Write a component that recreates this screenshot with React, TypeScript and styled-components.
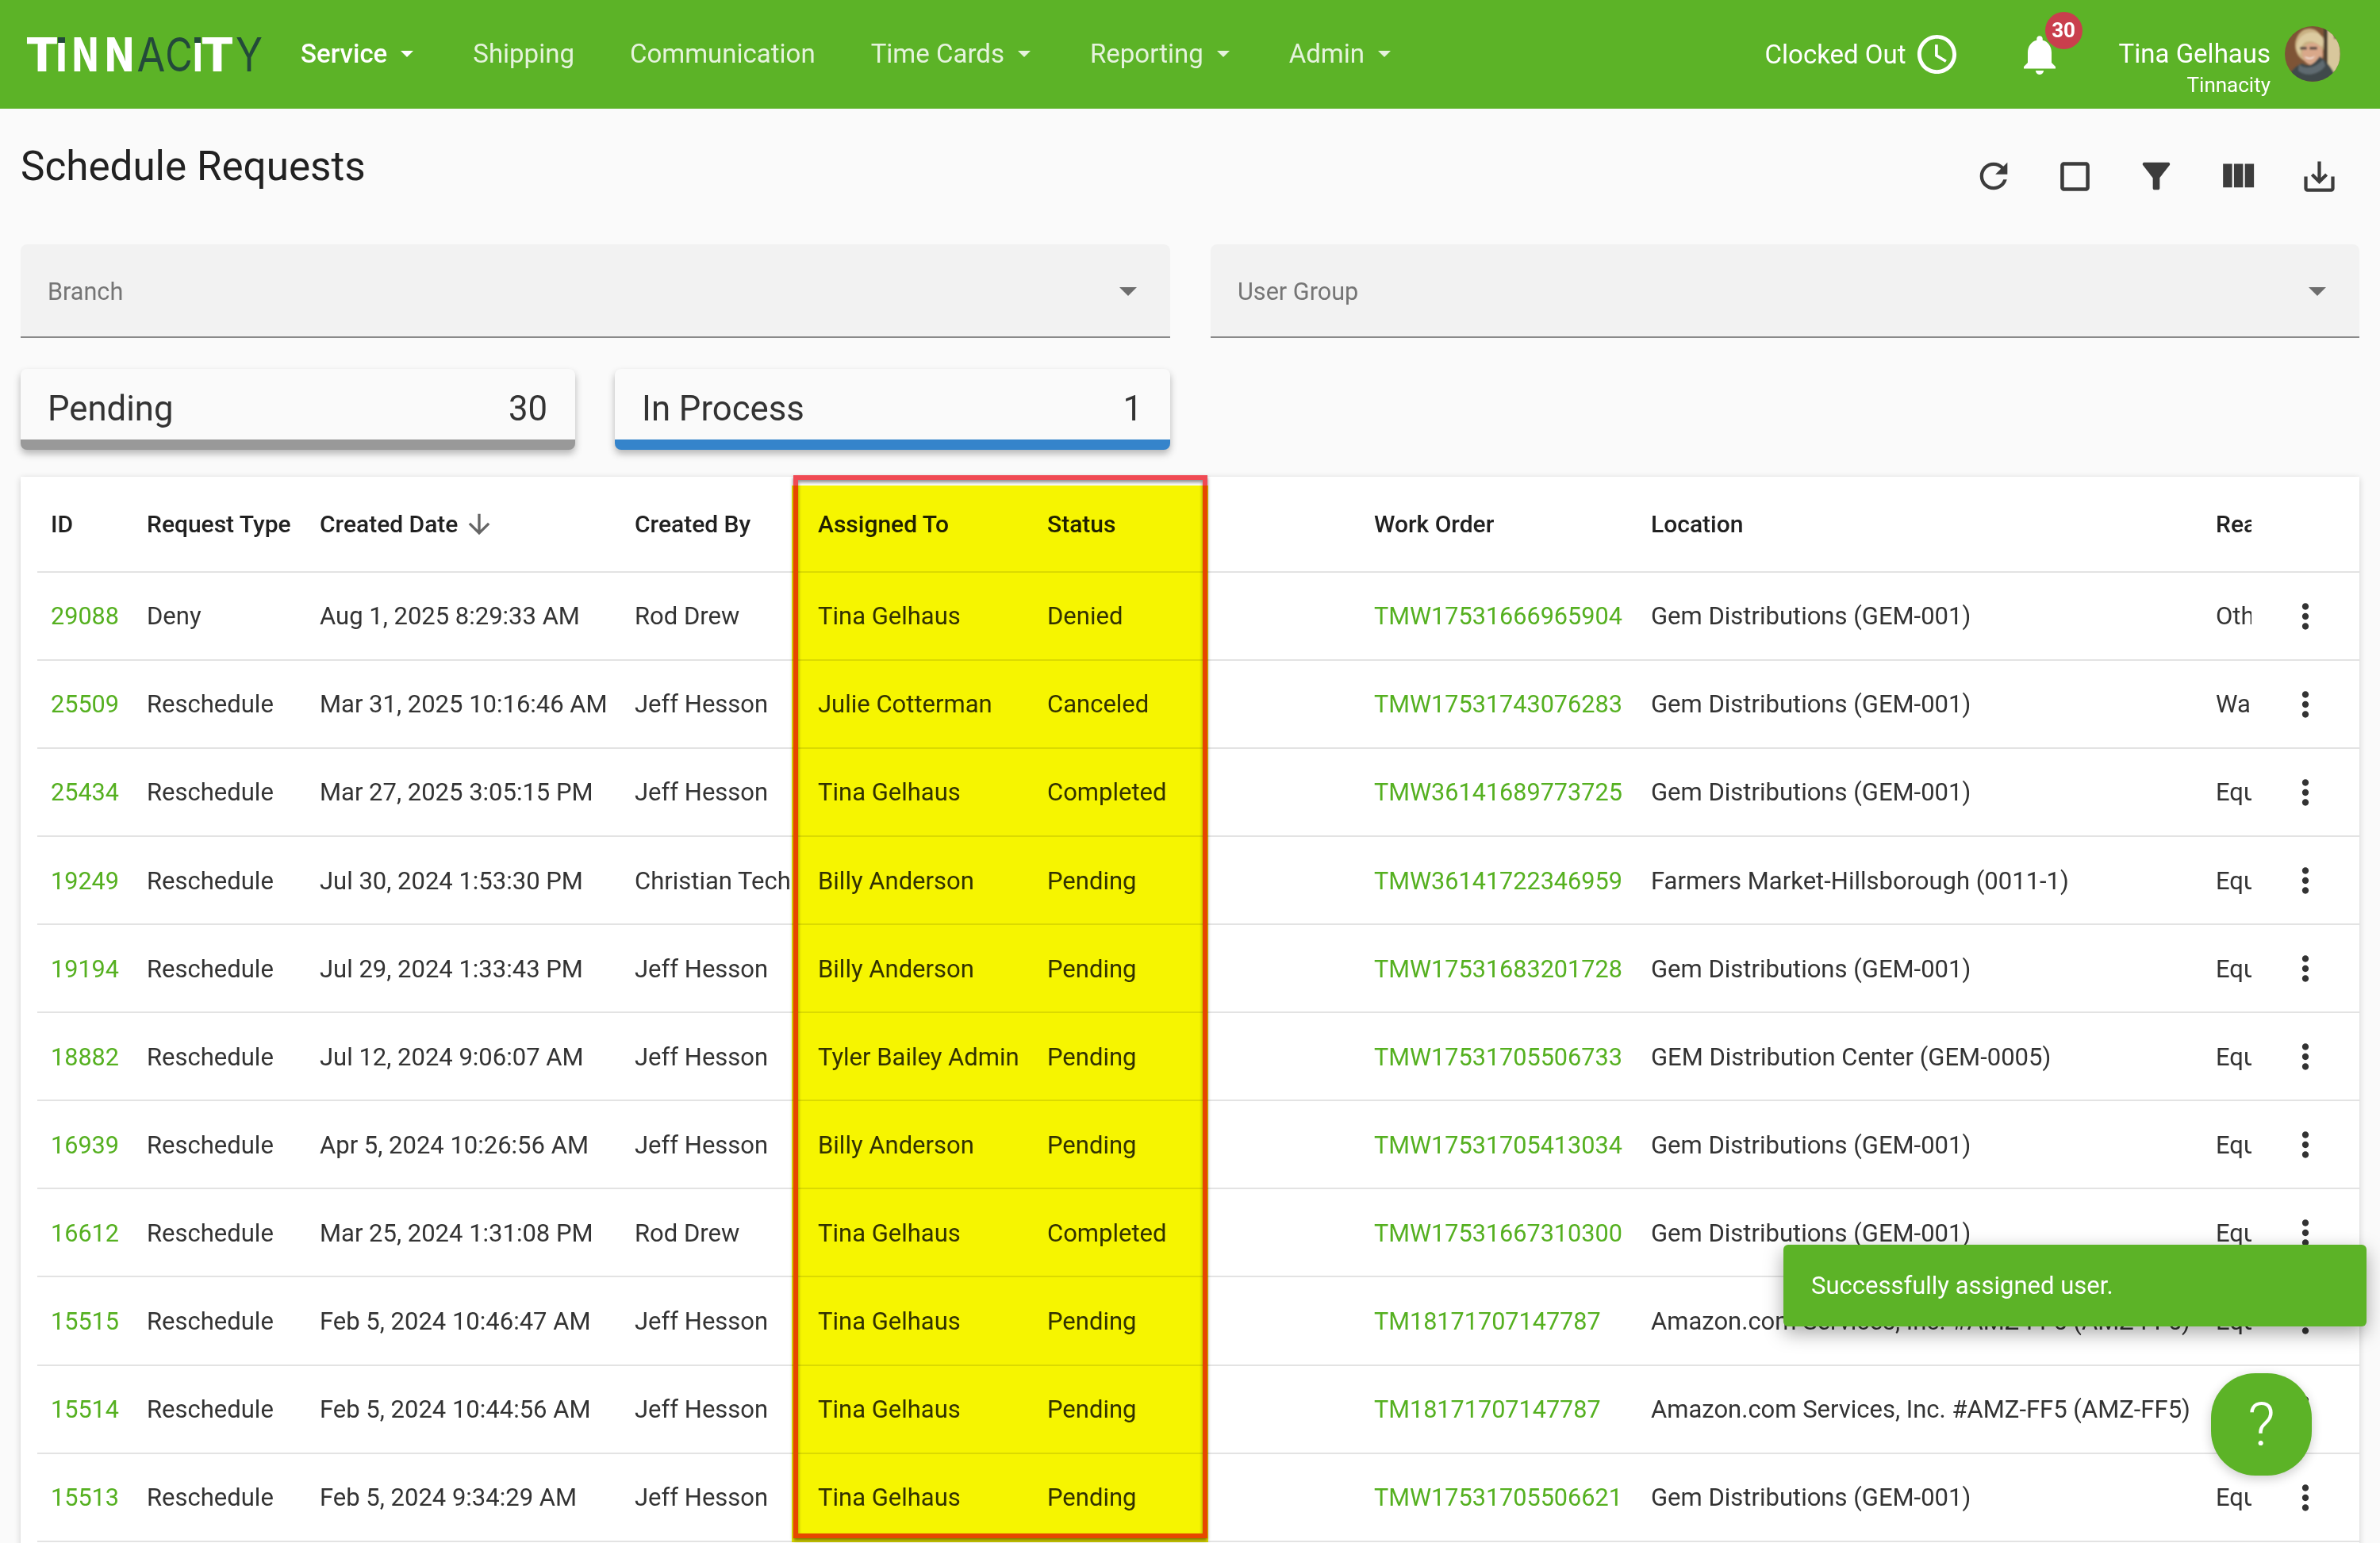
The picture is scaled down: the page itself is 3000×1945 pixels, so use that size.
import styled, { createGlobalStyle } from "styled-components";

const GREEN = "#5cb327";
const COLUMNS = "121px 218px 397px 231px 289px 412px 349px 712px 62px 136px";

const GlobalStyle = createGlobalStyle`
  html, body {
    margin: 0;
    padding: 0;
    background: #fafafa;
    overflow: hidden;
  }
  * {
    box-sizing: border-box;
  }
`;

const Page = styled.div`
  position: relative;
  isolation: isolate;
  width: 3000px;
  height: 1945px;
  overflow: hidden;
  background: #fafafa;
  color: #333;
  font-family: Roboto, "Liberation Sans", sans-serif;
  font-size: 30.6px;
`;

const Header = styled.header`
  display: flex;
  align-items: center;
  height: 137px;
  padding-left: 34px;
  background: ${GREEN};
  color: #fff;
  font-size: 33px;
`;

const Logo = styled.div`
  display: flex;
  align-items: center;
  width: 345px;
  height: 43px;
  flex-shrink: 0;
`;

const LogoLetter = styled.span<{
  $w: number;
  $gap?: number;
  $sx: number;
  $thin?: boolean;
  $dot?: boolean;
}>`
  position: relative;
  display: flex;
  justify-content: center;
  flex-shrink: 0;
  width: ${(p) => p.$w}px;
  height: 43px;
  margin-left: ${(p) => p.$gap ?? 0}px;
  line-height: 43px;
  font-family: Inter, Roboto, sans-serif;
  font-size: 59px;
  font-weight: ${(p) => (p.$thin ? 400 : 800)};
  color: ${(p) => (p.$thin ? "#234a3a" : "#fff")};

  & > span {
    display: block;
    transform: scaleX(${(p) => p.$sx});
  }

  ${(p) =>
    p.$dot &&
    `&::before {
      content: "";
      position: absolute;
      left: 0;
      right: 0;
      top: 0;
      height: 7px;
      background: #234a3a;
      z-index: 1;
    }`}
`;

const Nav = styled.nav`
  display: flex;
  align-items: center;
  gap: 70px;
  margin-bottom: 2px;
`;

const NavItem = styled.a<{ $active?: boolean }>`
  display: flex;
  align-items: center;
  gap: 17px;
  font-weight: ${(p) => (p.$active ? 500 : 400)};
  color: ${(p) => (p.$active ? "#fff" : "rgba(255,255,255,.84)")};
`;

const NavCaret = styled.span`
  width: 0;
  height: 0;
  margin-right: 5px;
  border-left: 8px solid transparent;
  border-right: 8px solid transparent;
  border-top: 8px solid currentColor;
`;

const HeaderRight = styled.div`
  display: flex;
  align-items: center;
  margin-left: auto;
  padding-right: 50px;
`;

const ClockStatus = styled.div`
  display: flex;
  align-items: center;
  gap: 9px;
`;

const BellWrap = styled.div`
  position: relative;
  display: flex;
  width: 60px;
  height: 60px;
  margin: 0 70px;
`;

const Badge = styled.span`
  position: absolute;
  left: 37px;
  top: -24px;
  display: flex;
  align-items: center;
  justify-content: center;
  width: 47px;
  height: 47px;
  border-radius: 50%;
  background: #c93f4d;
  color: #fff;
  font-size: 26px;
  font-weight: 700;
`;

const UserBlock = styled.div`
  display: flex;
  flex-direction: column;
  align-items: flex-end;
  margin-right: 18px;
  padding-top: 41px;
`;

const UserName = styled.div`
  line-height: 36px;
`;

const UserOrg = styled.div`
  font-size: 26px;
  line-height: 42px;
`;

const Avatar = styled.svg`
  display: block;
  width: 70px;
  height: 70px;
  border-radius: 50%;
  margin-top: -2px;
`;

const Content = styled.main`
  padding: 0 26px;
`;

const TitleRow = styled.div`
  display: flex;
  justify-content: space-between;
  height: 171px;
`;

const Title = styled.h1`
  margin: 44px 0 0;
  font-size: 51.2px;
  line-height: 58px;
  font-weight: 400;
  color: #212121;
`;

const Toolbar = styled.div`
  display: flex;
  gap: 47.5px;
  margin: 57.5px 23.5px 0 0;
`;

const ToolSlot = styled.span`
  display: flex;
  align-items: center;
  justify-content: center;
  width: 55px;
  height: 55px;
`;

const ToolIcon = styled.svg<{ $size: number }>`
  display: block;
  width: ${(p) => p.$size}px;
  height: ${(p) => p.$size}px;
  fill: #3c3c3c;
`;

const FilterRow = styled.div`
  display: grid;
  grid-template-columns: 1449px 1448px;
  gap: 51px;
`;

const FilterBox = styled.div`
  display: flex;
  align-items: center;
  justify-content: space-between;
  height: 118px;
  padding: 2px 42px 0 34px;
  border-radius: 8px 8px 0 0;
  border-bottom: 2px solid #8a8a8a;
  background: #f2f2f2;
  color: #757575;
`;

const FilterCaret = styled.span`
  width: 0;
  height: 0;
  border-left: 11px solid transparent;
  border-right: 11px solid transparent;
  border-top: 11px solid #6e6e6e;
`;

const CountRow = styled.div`
  display: grid;
  grid-template-columns: 699px 700px;
  gap: 50px;
  width: 1449px;
  margin-top: 39px;
`;

const CountCard = styled.div<{ $accent: string }>`
  display: flex;
  align-items: center;
  justify-content: space-between;
  height: 102px;
  padding: 11px 35px 0 34px;
  border-radius: 8px;
  border-bottom: 13px solid ${(p) => p.$accent};
  background: #fafafa;
  box-shadow: 0 5px 10px rgba(0, 0, 0, 0.28);
  font-size: 43.7px;
  color: #333;
`;

const TableCard = styled.section`
  height: 1400px;
  margin-top: 34px;
  padding-left: 21px;
  background: #fff;
  box-shadow: 0 2px 8px rgba(0, 0, 0, 0.18);
`;

const Row = styled.div<{ $head?: boolean }>`
  display: grid;
  grid-template-columns: ${COLUMNS};
  align-items: center;
  height: ${(p) => (p.$head ? "120.7px" : "111.1px")};
  padding-top: 1px;
  border-bottom: 2px solid #e3e3e3;
  white-space: nowrap;
  font-size: ${(p) => (p.$head ? "30px" : "31px")};
  font-weight: ${(p) => (p.$head ? 500 : 400)};
  color: ${(p) => (p.$head ? "#212121" : "#333")};
`;

const Cell = styled.div`
  display: flex;
  align-items: center;
  padding-left: 17px;
  min-width: 0;
`;

const ReasonCell = styled(Cell)`
  overflow: hidden;
`;

const LinkCell = styled(Cell)`
  color: #55b020;
  font-size: 30.6px;
`;

const ActionCell = styled(Cell)`
  justify-content: center;
  padding-left: 0;
`;

const SortIcon = styled.svg`
  flex-shrink: 0;
  width: 40px;
  height: 40px;
  margin-left: 7px;
  fill: #666;
`;

const MoreIcon = styled.svg`
  display: block;
  width: 50px;
  height: 50px;
  fill: #333;
`;

const RedBox = styled.div`
  position: absolute;
  left: 1000px;
  top: 599px;
  width: 522px;
  height: 1340px;
  border: 6px solid #f04a54;
  box-shadow: 0 3px 4px rgba(0, 0, 0, 0.5), inset 0 3px 4px rgba(0, 0, 0, 0.45);
`;

const YellowBox = styled.div`
  position: absolute;
  left: 998px;
  top: 612px;
  width: 525px;
  height: 1332px;
  background: #f6f500;
  mix-blend-mode: multiply;
`;

const Toast = styled.div`
  position: absolute;
  left: 2248px;
  top: 1569px;
  display: flex;
  align-items: center;
  width: 735px;
  height: 103px;
  padding-left: 35px;
  border-radius: 6px;
  background: ${GREEN};
  box-shadow: 0 8px 24px rgba(0, 0, 0, 0.35);
  color: #fff;
  font-size: 31px;
`;

const HelpButton = styled.div`
  position: absolute;
  left: 2787px;
  top: 1731px;
  display: flex;
  align-items: center;
  justify-content: center;
  width: 127px;
  height: 129px;
  border-radius: 56px;
  background: ${GREEN};
  box-shadow: 0 4px 14px rgba(0, 0, 0, 0.2);
  color: #fff;
  font-size: 76px;
  font-weight: 300;
`;

type Req = {
  id: string;
  type: string;
  date: string;
  by: string;
  to: string;
  status: string;
  order: string;
  location: string;
  reason: string;
};

const GEM = "Gem Distributions (GEM-001)";
const AMZ = "Amazon.com Services, Inc. #AMZ-FF5 (AMZ-FF5)";

const requests: Req[] = [
  { id: "29088", type: "Deny", date: "Aug 1, 2025 8:29:33 AM", by: "Rod Drew", to: "Tina Gelhaus", status: "Denied", order: "TMW17531666965904", location: GEM, reason: "Other" },
  { id: "25509", type: "Reschedule", date: "Mar 31, 2025 10:16:46 AM", by: "Jeff Hesson", to: "Julie Cotterman", status: "Canceled", order: "TMW17531743076283", location: GEM, reason: "Wait" },
  { id: "25434", type: "Reschedule", date: "Mar 27, 2025 3:05:15 PM", by: "Jeff Hesson", to: "Tina Gelhaus", status: "Completed", order: "TMW36141689773725", location: GEM, reason: "Equipment" },
  { id: "19249", type: "Reschedule", date: "Jul 30, 2024 1:53:30 PM", by: "Christian Tech", to: "Billy Anderson", status: "Pending", order: "TMW36141722346959", location: "Farmers Market-Hillsborough (0011-1)", reason: "Equipment" },
  { id: "19194", type: "Reschedule", date: "Jul 29, 2024 1:33:43 PM", by: "Jeff Hesson", to: "Billy Anderson", status: "Pending", order: "TMW17531683201728", location: GEM, reason: "Equipment" },
  { id: "18882", type: "Reschedule", date: "Jul 12, 2024 9:06:07 AM", by: "Jeff Hesson", to: "Tyler Bailey Admin", status: "Pending", order: "TMW17531705506733", location: "GEM Distribution Center (GEM-0005)", reason: "Equipment" },
  { id: "16939", type: "Reschedule", date: "Apr 5, 2024 10:26:56 AM", by: "Jeff Hesson", to: "Billy Anderson", status: "Pending", order: "TMW17531705413034", location: GEM, reason: "Equipment" },
  { id: "16612", type: "Reschedule", date: "Mar 25, 2024 1:31:08 PM", by: "Rod Drew", to: "Tina Gelhaus", status: "Completed", order: "TMW17531667310300", location: GEM, reason: "Equipment" },
  { id: "15515", type: "Reschedule", date: "Feb 5, 2024 10:46:47 AM", by: "Jeff Hesson", to: "Tina Gelhaus", status: "Pending", order: "TM18171707147787", location: AMZ, reason: "Equipment" },
  { id: "15514", type: "Reschedule", date: "Feb 5, 2024 10:44:56 AM", by: "Jeff Hesson", to: "Tina Gelhaus", status: "Pending", order: "TM18171707147787", location: AMZ, reason: "Equipment" },
  { id: "15513", type: "Reschedule", date: "Feb 5, 2024 9:34:29 AM", by: "Jeff Hesson", to: "Tina Gelhaus", status: "Pending", order: "TMW17531705506621", location: GEM, reason: "Equipment" },
];

const toolIcons = [
  { size: 52, d: "M17.65 6.35C16.2 4.9 14.21 4 12 4c-4.42 0-7.99 3.58-7.99 8s3.57 8 7.99 8c3.73 0 6.84-2.55 7.73-6h-2.08c-.82 2.33-3.04 4-5.65 4-3.31 0-6-2.69-6-6s2.69-6 6-6c1.66 0 3.14.69 4.22 1.78L13 11h7V4l-2.35 2.35z" },
  { size: 57, d: "M18 4H6c-1.1 0-2 .9-2 2v12c0 1.1.9 2 2 2h12c1.1 0 2-.9 2-2V6c0-1.1-.9-2-2-2zm0 14H6V6h12v12z" },
  { size: 52, d: "M4.25 5.61C6.27 8.2 10 13 10 13v6c0 .55.45 1 1 1h2c.55 0 1-.45 1-1v-6s3.72-4.8 5.74-7.39c.51-.66.04-1.61-.79-1.61H5.04c-.83 0-1.3.95-.79 1.61z" },
  { size: 55, d: "M10 18h5V5h-5v13zm-6 0h5V5H4v13zM16 5v13h5V5h-5z" },
  { size: 51, d: "M19 12v7H5v-7H3v7c0 1.1.9 2 2 2h14c1.1 0 2-.9 2-2v-7h-2zm-6 .67l2.59-2.58L17 11.5l-5 5-5-5 1.41-1.41L11 12.67V3h2z" },
];

function AvatarPhoto() {
  return (
    <Avatar viewBox="0 0 70 70">
      <defs>
        <filter id="soft">
          <feGaussianBlur stdDeviation="1.2" />
        </filter>
      </defs>
      <rect width="70" height="70" fill="#7e5436" />
      <g filter="url(#soft)">
        <rect x="50" y="0" width="20" height="70" fill="#d8c79c" />
        <rect x="49" y="0" width="5" height="50" fill="#4d4132" />
        <rect x="62" y="0" width="8" height="16" fill="#5a4a38" />
        <ellipse cx="31" cy="24" rx="18" ry="21" fill="#c9b183" />
        <ellipse cx="35" cy="35" rx="13" ry="14" fill="#d9a88a" />
        <path d="M15 26C16 8 38 2 48 14c2 6 0 10-2 12-8-8-16-8-20-6-4 2-7 8-6 16-3-2-5-6-5-10z" fill="#dccba0" />
        <rect x="19" y="26" width="9" height="3.5" rx="1.5" fill="#5a4a44" />
        <rect x="31" y="26" width="10" height="3.5" rx="1.5" fill="#5a4a44" />
        <path d="M25 38c4 3 10 3 13-1-1 5-11 6-13 1z" fill="#fff" />
        <path d="M4 70c1-12 9-20 18-23 8 5 14 2 22-9 8 6 18 16 22 32z" fill="#3f484c" />
        <path d="M18 48c8 8 22 4 30-6l3 8c-8 12-26 14-34 6z" fill="#5f6a70" />
      </g>
    </Avatar>
  );
}

function CountBar({ label, value, accent }: { label: string; value: number; accent: string }) {
  return (
    <CountCard $accent={accent}>
      <span>{label}</span>
      <span>{value}</span>
    </CountCard>
  );
}

export default function App() {
  return (
    <Page>
      <GlobalStyle />
      <Header>
        <Logo>
          <LogoLetter $w={38} $sx={1.05}><span>T</span></LogoLetter>
          <LogoLetter $w={9} $gap={1} $sx={0.8} $dot><span>I</span></LogoLetter>
          <LogoLetter $w={32} $gap={10} $sx={0.72}><span>N</span></LogoLetter>
          <LogoLetter $w={36} $gap={9} $sx={0.8}><span>N</span></LogoLetter>
          <LogoLetter $w={30} $gap={6} $sx={0.88} $thin><span>A</span></LogoLetter>
          <LogoLetter $w={28} $gap={7} $sx={0.8} $thin><span>C</span></LogoLetter>
          <LogoLetter $w={8} $gap={5} $sx={0.7} $dot><span>I</span></LogoLetter>
          <LogoLetter $w={38} $gap={2} $sx={1.05}><span>T</span></LogoLetter>
          <LogoLetter $w={28} $gap={7} $sx={0.85} $thin><span>Y</span></LogoLetter>
        </Logo>
        <Nav>
          <NavItem $active>Service <NavCaret /></NavItem>
          <NavItem>Shipping</NavItem>
          <NavItem>Communication</NavItem>
          <NavItem>Time Cards <NavCaret /></NavItem>
          <NavItem>Reporting <NavCaret /></NavItem>
          <NavItem>Admin <NavCaret /></NavItem>
        </Nav>
        <HeaderRight>
          <ClockStatus>
            Clocked Out
            <svg width="59" height="59" viewBox="0 0 24 24" fill="#fff">
              <path d="M11.99 2C6.47 2 2 6.48 2 12s4.47 10 9.99 10C17.52 22 22 17.52 22 12S17.52 2 11.99 2zM12 20c-4.42 0-8-3.58-8-8s3.58-8 8-8 8 3.58 8 8-3.58 8-8 8zm.5-13H11v6l5.25 3.15.75-1.23-4.5-2.67z" />
            </svg>
          </ClockStatus>
          <BellWrap>
            <svg width="60" height="60" viewBox="0 0 24 24" fill="#fff">
              <path d="M12 22c1.1 0 2-.9 2-2h-4c0 1.1.89 2 2 2zm6-6v-5c0-3.07-1.64-5.64-4.5-6.32V4c0-.83-.67-1.5-1.5-1.5s-1.5.67-1.5 1.5v.68C7.63 5.36 6 7.92 6 11v5l-2 2v1h16v-1l-2-2z" />
            </svg>
            <Badge>30</Badge>
          </BellWrap>
          <UserBlock>
            <UserName>Tina Gelhaus</UserName>
            <UserOrg>Tinnacity</UserOrg>
          </UserBlock>
          <AvatarPhoto />
        </HeaderRight>
      </Header>

      <Content>
        <TitleRow>
          <Title>Schedule Requests</Title>
          <Toolbar>
            {toolIcons.map((icon) => (
              <ToolSlot key={icon.d}>
                <ToolIcon $size={icon.size} viewBox="0 0 24 24">
                  <path d={icon.d} />
                </ToolIcon>
              </ToolSlot>
            ))}
          </Toolbar>
        </TitleRow>

        <FilterRow>
          <FilterBox>Branch <FilterCaret /></FilterBox>
          <FilterBox>User Group <FilterCaret /></FilterBox>
        </FilterRow>

        <CountRow>
          <CountBar label="Pending" value={30} accent="#999999" />
          <CountBar label="In Process" value={1} accent="#3584cb" />
        </CountRow>

        <TableCard>
          <Row $head>
            <Cell>ID</Cell>
            <Cell>Request Type</Cell>
            <Cell>
              Created Date
              <SortIcon viewBox="0 0 24 24">
                <path d="M20 12l-1.41-1.41L13 16.17V4h-2v12.17l-5.58-5.59L4 12l8 8 8-8z" />
              </SortIcon>
            </Cell>
            <Cell>Created By</Cell>
            <Cell>Assigned To</Cell>
            <Cell>Status</Cell>
            <Cell>Work Order</Cell>
            <Cell>Location</Cell>
            <ReasonCell>Reason</ReasonCell>
            <Cell />
          </Row>
          {requests.map((r) => (
            <Row key={r.id}>
              <LinkCell>{r.id}</LinkCell>
              <Cell>{r.type}</Cell>
              <Cell>{r.date}</Cell>
              <Cell>{r.by}</Cell>
              <Cell>{r.to}</Cell>
              <Cell>{r.status}</Cell>
              <LinkCell>{r.order}</LinkCell>
              <Cell>{r.location}</Cell>
              <ReasonCell>{r.reason}</ReasonCell>
              <ActionCell>
                <MoreIcon viewBox="0 0 24 24">
                  <path d="M12 8c1.1 0 2-.9 2-2s-.9-2-2-2-2 .9-2 2 .9 2 2 2zm0 2c-1.1 0-2 .9-2 2s.9 2 2 2 2-.9 2-2-.9-2-2-2zm0 6c-1.1 0-2 .9-2 2s.9 2 2 2 2-.9 2-2-.9-2-2-2z" />
                </MoreIcon>
              </ActionCell>
            </Row>
          ))}
        </TableCard>
      </Content>

      <RedBox />
      <YellowBox />
      <Toast>Successfully assigned user.</Toast>
      <HelpButton>?</HelpButton>
    </Page>
  );
}
